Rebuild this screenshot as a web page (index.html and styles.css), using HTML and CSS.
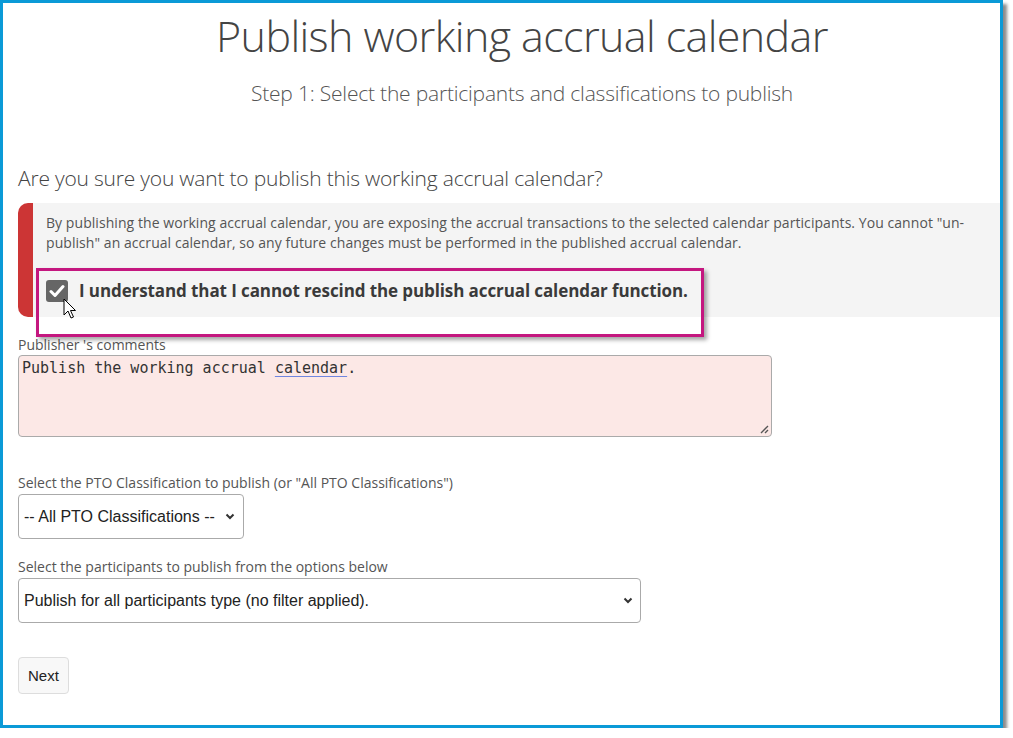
FILE: index.html
```html
<!DOCTYPE html>
<html lang="en">

<head>
    <meta charset="UTF-8">
    <title>Publish working accrual calendar</title>
    <link rel="stylesheet" href="styles.css">
</head>

<body>
    <div class="frame">
        <main class="page">
            <h1>Publish working accrual calendar</h1>
            <h2 class="step">Step 1: Select the participants and classifications to publish</h2>

            <h3 class="question">Are you sure you want to publish this working accrual calendar?</h3>

            <div class="alert">
                <p class="alert-text">By publishing the working accrual calendar, you are exposing the accrual transactions to the selected calendar participants. You cannot "un-<br>publish" an accrual calendar, so any future changes must be performed in the published accrual calendar.</p>
                <label class="confirm">
                    <span class="checkbox">
                        <svg width="16" height="14" viewBox="0 0 16 14">
                            <path d="M2 7.5 L6 11.5 L14 2.5" fill="none" stroke="#fff" stroke-width="3" stroke-linecap="round" stroke-linejoin="round" />
                        </svg>
                    </span>
                    I understand that I cannot rescind the publish accrual calendar function.
                </label>
            </div>

            <div class="field">
                <div class="label">Publisher 's comments</div>
                <div class="textarea">Publish the working accrual <span class="spell">calendar</span>.
                    <svg class="grip" width="10" height="10" viewBox="0 0 10 10">
                        <path d="M9 2 L2 9 M9 6 L6 9" stroke="#555" stroke-width="1.4" fill="none" />
                    </svg>
                </div>
            </div>

            <div class="field pto">
                <div class="label">Select the PTO Classification to publish (or "All PTO Classifications")</div>
                <div class="select select-short">
                    <span>-- All PTO Classifications --</span>
                    <svg width="10" height="7" viewBox="0 0 10 7">
                        <path d="M1.5 1.5 L5 5 L8.5 1.5" fill="none" stroke="#333" stroke-width="2" />
                    </svg>
                </div>
            </div>

            <div class="field">
                <div class="label">Select the participants to publish from the options below</div>
                <div class="select select-long">
                    <span>Publish for all participants type (no filter applied).</span>
                    <svg width="10" height="7" viewBox="0 0 10 7">
                        <path d="M1.5 1.5 L5 5 L8.5 1.5" fill="none" stroke="#333" stroke-width="2" />
                    </svg>
                </div>
            </div>

            <button class="next">Next</button>
        </main>

        <!-- annotation overlay -->
        <div class="callout"></div>
        <svg class="cursor" width="14" height="22" viewBox="0 0 14 22">
            <path d="M1 1 L1 17 L5 13 L8 20 L10.5 19 L7.5 12.5 L12.5 12.5 Z" fill="#fff" stroke="#000" stroke-width="1" stroke-linejoin="round" />
        </svg>
    </div>
</body>

</html>
```

FILE: styles.css
```css
body {
    margin: 0;
    background-color: #fff;
    font-family: "Open Sans", "Noto Sans", sans-serif;
    color: #444;
}

.frame {
    position: relative;
    box-sizing: border-box;
    width: 1003px;
    height: 728px;
    border: 3px solid #0b9ad7;
    background-color: #fff;
    box-shadow: 4px 4px 3px rgba(0, 0, 0, 0.45);
    overflow: hidden;
}

.page {
    padding: 0 0 0 15px;
}

h1 {
    margin: 9px 0 0 0;
    padding-left: 26px;
    text-align: center;
    font-size: 43px;
    font-weight: 300;
    line-height: 48px;
    color: #444;
    letter-spacing: -0.6px;
}

.step {
    margin: 18px 0 0 0;
    padding-left: 26px;
    text-align: center;
    font-size: 21px;
    font-weight: 300;
    line-height: 30px;
    color: #555;
    letter-spacing: -0.2px;
}

.question {
    margin: 55px 0 0 0;
    font-size: 21px;
    font-weight: 300;
    line-height: 30px;
    color: #444;
    letter-spacing: -0.2px;
}

.alert {
    margin-top: 10px;
    height: 114px;
    box-sizing: border-box;
    background-color: #f4f4f4;
    border-left: 15px solid #cc3535;
    border-radius: 10px 0 0 10px;
    padding: 10px 0 0 13px;
}

.alert-text {
    margin: 0;
    font-size: 14px;
    line-height: 20px;
    color: #555;
    letter-spacing: 0.06px;
}

.confirm {
    display: flex;
    align-items: center;
    gap: 11px;
    margin-top: 26px;
    font-size: 17px;
    font-weight: 700;
    color: #3a3a3a;
    letter-spacing: -0.1px;
}

.checkbox {
    display: flex;
    align-items: center;
    justify-content: center;
    width: 22px;
    height: 22px;
    border-radius: 3px;
    background-color: #666;
}

.field {
    margin-top: 19px;
}

.label {
    font-size: 14px;
    line-height: 18px;
    color: #555;
}

.textarea {
    position: relative;
    box-sizing: border-box;
    width: 754px;
    height: 82px;
    margin-top: 1px;
    padding: 2px 3px;
    background-color: #fce8e6;
    border: 1px solid #aaa;
    border-radius: 4px;
    font-family: "DejaVu Sans Mono", "Liberation Mono", monospace;
    font-size: 15px;
    line-height: 20px;
    color: #333;
}

.spell {
    text-decoration: underline;
    text-decoration-color: #6f86e0;
    text-underline-offset: 3px;
}

.grip {
    position: absolute;
    right: 2px;
    bottom: 2px;
}

.field.pto {
    margin-top: 37px;
}

.select {
    display: flex;
    align-items: center;
    justify-content: space-between;
    box-sizing: border-box;
    height: 45px;
    margin-top: 2px;
    padding: 0 8px 0 5px;
    border: 1px solid #aaa;
    border-radius: 4px;
    font-family: Arial, "Liberation Sans", sans-serif;
    font-size: 16px;
    color: #222;
}

.select-short {
    width: 226px;
}

.select-long {
    width: 623px;
    padding-right: 7px;
}

.next {
    margin-top: 34px;
    height: 37px;
    padding: 0 9px;
    background-color: #f8f8f8;
    border: 1px solid #ddd;
    border-radius: 4px;
    font-family: Arial, "Liberation Sans", sans-serif;
    font-size: 15px;
    color: #222;
}

.callout {
    position: absolute;
    left: 33px;
    top: 265px;
    width: 668px;
    height: 69px;
    box-sizing: border-box;
    border: 3px solid #c4177f;
    box-shadow: 3px 3px 4px rgba(0, 0, 0, 0.35);
}

.cursor {
    position: absolute;
    left: 60px;
    top: 295px;
}
```
